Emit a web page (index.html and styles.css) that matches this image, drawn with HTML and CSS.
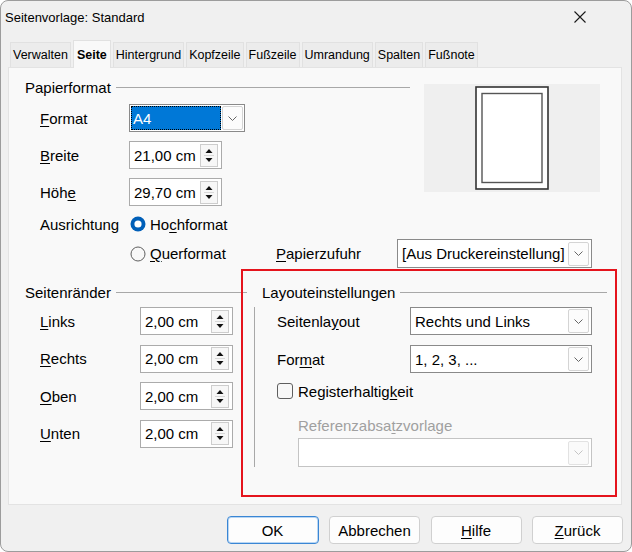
FILE: index.html
```html
<!DOCTYPE html>
<html lang="de">
<head>
<meta charset="UTF-8">
<title>Seitenvorlage: Standard</title>
<link rel="stylesheet" href="styles.css">
</head>
<body>
<div class="dialog">
    <div class="titlebar">
        <span class="title">Seitenvorlage: Standard</span>
        <span class="close">
            <svg width="12" height="12" viewBox="0 0 12 12"><path d="M0.5 0.5 L11.5 11.5 M11.5 0.5 L0.5 11.5" stroke="#1a1a1a" stroke-width="1.1" fill="none"/></svg>
        </span>
    </div>

    <div class="tabs">
        <div class="tab">Verwalten</div>
        <div class="tab active">Seite</div>
        <div class="tab">Hintergrund</div>
        <div class="tab">Kopfzeile</div>
        <div class="tab">Fußzeile</div>
        <div class="tab">Umrandung</div>
        <div class="tab">Spalten</div>
        <div class="tab">Fußnote</div>
    </div>

    <div class="panel">
        <div class="top">
            <div class="paper">
                <div class="group-head"><span>Papierformat</span><span class="line"></span></div>

                <div class="row first">
                    <span class="lbl"><u>F</u>ormat</span>
                    <div class="combo combo-a4">
                        <span class="val"><span class="sel">A4</span></span>
                        <span class="drop"><svg width="9" height="5" viewBox="0 0 9 5"><polyline points="0.5,0.5 4.5,4.5 8.5,0.5" fill="none" stroke="#666" stroke-width="1"/></svg></span>
                    </div>
                </div>
                <div class="row">
                    <span class="lbl"><u>B</u>reite</span>
                    <div class="spin">
                        <span class="val">21,00 cm</span>
                        <span class="btns"><svg width="16" height="21" viewBox="0 0 16 21"><polygon points="4.5,8 11.5,8 8,4" fill="#111"/><line x1="3" y1="10.5" x2="13" y2="10.5" stroke="#d8d8d8"/><polygon points="4.5,13 11.5,13 8,17" fill="#111"/></svg></span>
                    </div>
                </div>
                <div class="row">
                    <span class="lbl">Höh<u>e</u></span>
                    <div class="spin">
                        <span class="val">29,70 cm</span>
                        <span class="btns"><svg width="16" height="21" viewBox="0 0 16 21"><polygon points="4.5,8 11.5,8 8,4" fill="#111"/><line x1="3" y1="10.5" x2="13" y2="10.5" stroke="#d8d8d8"/><polygon points="4.5,13 11.5,13 8,17" fill="#111"/></svg></span>
                    </div>
                </div>
                <div class="row orient">
                    <span class="lbl wide">Ausrichtung</span>
                    <span class="radio">
                        <svg width="16" height="16" viewBox="0 0 16 16"><circle cx="8" cy="8" r="7.5" fill="#005fb8"/><circle cx="8" cy="8" r="3.6" fill="#fff"/></svg>
                        <span>Ho<u>c</u>hformat</span>
                    </span>
                </div>
            </div>
            <div class="preview">
                <svg width="74" height="104" viewBox="0 0 74 104">
                    <rect x="1" y="1" width="72" height="102" fill="#fff" stroke="#333" stroke-width="1.6"/>
                    <rect x="7" y="7.5" width="60" height="89" fill="#fff" stroke="#555" stroke-width="1.4"/>
                </svg>
            </div>
        </div>

        <div class="row tray">
            <span class="radio radio-q">
                <svg width="16" height="16" viewBox="0 0 16 16"><circle cx="8" cy="8" r="7" fill="#f8f8f8" stroke="#5f5f5f" stroke-width="1"/></svg>
                <span><u>Q</u>uerformat</span>
            </span>
            <span class="lbl tray-lbl"><u>P</u>apierzufuhr</span>
            <div class="combo combo-tray">
                <span class="val">[Aus Druckereinstellung]</span>
                <span class="drop"><svg width="9" height="5" viewBox="0 0 9 5"><polyline points="0.5,0.5 4.5,4.5 8.5,0.5" fill="none" stroke="#666" stroke-width="1"/></svg></span>
            </div>
        </div>

        <div class="bottom">
            <div class="margins">
                <div class="group-head"><span>Seitenränder</span><span class="line"></span></div>
                <div class="row first">
                    <span class="lbl"><u>L</u>inks</span>
                    <div class="spin">
                        <span class="val">2,00 cm</span>
                        <span class="btns"><svg width="16" height="21" viewBox="0 0 16 21"><polygon points="4.5,8 11.5,8 8,4" fill="#111"/><line x1="3" y1="10.5" x2="13" y2="10.5" stroke="#d8d8d8"/><polygon points="4.5,13 11.5,13 8,17" fill="#111"/></svg></span>
                    </div>
                </div>
                <div class="row">
                    <span class="lbl"><u>R</u>echts</span>
                    <div class="spin">
                        <span class="val">2,00 cm</span>
                        <span class="btns"><svg width="16" height="21" viewBox="0 0 16 21"><polygon points="4.5,8 11.5,8 8,4" fill="#111"/><line x1="3" y1="10.5" x2="13" y2="10.5" stroke="#d8d8d8"/><polygon points="4.5,13 11.5,13 8,17" fill="#111"/></svg></span>
                    </div>
                </div>
                <div class="row">
                    <span class="lbl"><u>O</u>ben</span>
                    <div class="spin">
                        <span class="val">2,00 cm</span>
                        <span class="btns"><svg width="16" height="21" viewBox="0 0 16 21"><polygon points="4.5,8 11.5,8 8,4" fill="#111"/><line x1="3" y1="10.5" x2="13" y2="10.5" stroke="#d8d8d8"/><polygon points="4.5,13 11.5,13 8,17" fill="#111"/></svg></span>
                    </div>
                </div>
                <div class="row">
                    <span class="lbl"><u>U</u>nten</span>
                    <div class="spin">
                        <span class="val">2,00 cm</span>
                        <span class="btns"><svg width="16" height="21" viewBox="0 0 16 21"><polygon points="4.5,8 11.5,8 8,4" fill="#111"/><line x1="3" y1="10.5" x2="13" y2="10.5" stroke="#d8d8d8"/><polygon points="4.5,13 11.5,13 8,17" fill="#111"/></svg></span>
                    </div>
                </div>
            </div>

            <div class="layout">
                <div class="group-head"><span>Layouteinstellungen</span><span class="line"></span></div>
                <div class="layout-body">
                    <div class="lrow">
                        <span class="lbl">Seitenla<u>y</u>out</span>
                        <div class="combo combo-wide">
                            <span class="val">Rechts und Links</span>
                            <span class="drop"><svg width="9" height="5" viewBox="0 0 9 5"><polyline points="0.5,0.5 4.5,4.5 8.5,0.5" fill="none" stroke="#666" stroke-width="1"/></svg></span>
                        </div>
                    </div>
                    <div class="lrow second">
                        <span class="lbl">For<u>m</u>at</span>
                        <div class="combo combo-wide">
                            <span class="val">1, 2, 3, ...</span>
                            <span class="drop"><svg width="9" height="5" viewBox="0 0 9 5"><polyline points="0.5,0.5 4.5,4.5 8.5,0.5" fill="none" stroke="#666" stroke-width="1"/></svg></span>
                        </div>
                    </div>
                    <div class="check-row">
                        <span class="checkbox"></span>
                        <span>Registerhaltig<u>k</u>eit</span>
                    </div>
                    <div class="ref-lbl">Referenzabsa<u>t</u>zvorlage</div>
                    <div class="combo combo-off">
                        <span class="val"></span>
                        <span class="drop"><svg width="9" height="5" viewBox="0 0 9 5"><polyline points="0.5,0.5 4.5,4.5 8.5,0.5" fill="none" stroke="#c4c4c4" stroke-width="1"/></svg></span>
                    </div>
                </div>
            </div>
        </div>
    </div>

    <div class="buttons">
        <button class="btn default">OK</button>
        <button class="btn">Abbrechen</button>
        <button class="btn"><u>H</u>ilfe</button>
        <button class="btn"><u>Z</u>urück</button>
    </div>

    <div class="highlight"></div>
</div>
</body>
</html>
```

FILE: styles.css
```css
* {
    box-sizing: border-box;
}
body {
    margin: 0;
    font-family: "Liberation Sans", Arial, sans-serif;
    font-size: 15px;
    color: #000;
    background: #fff;
}
u {
    text-underline-offset: 2px;
}

.dialog {
    position: relative;
    width: 632px;
    height: 552px;
    border: 1px solid #9c9c9c;
    border-radius: 8px;
    background: #f0f0f0;
    overflow: hidden;
}

.titlebar {
    height: 32px;
    display: flex;
    align-items: center;
    justify-content: space-between;
    padding-left: 4px;
    font-size: 13px;
}
.close {
    display: flex;
    margin-right: 45px;
}

.tabs {
    position: relative;
    z-index: 1;
    display: flex;
    align-items: flex-end;
    gap: 2px;
    height: 28px;
    margin: 7px 0 -1px 9px;
    font-size: 12.5px;
}
.tab {
    height: 25px;
    margin-bottom: 1px;
    padding: 0 2px;
    display: flex;
    align-items: center;
    background: #ececec;
    border: 1px solid #e1e1e1;
    border-bottom: none;
}
.tab.active {
    height: 28px;
    margin-bottom: 0;
    padding: 0 3px;
    background: #f9f9f9;
    font-weight: bold;
}

.panel {
    height: 438px;
    margin: 0 9px 0 7px;
    padding: 10px 0 0 16px;
    background: #f9f9f9;
    border: 1px solid #e3e3e3;
}

.group-head {
    display: flex;
    align-items: center;
    height: 18px;
}
.group-head .line {
    flex: 1;
    height: 1px;
    margin-left: 5px;
    background: #a8a8a8;
}

.top {
    display: flex;
}
.paper {
    width: 385px;
}
.preview {
    width: 176px;
    height: 108px;
    margin: 6px 0 0 14px;
    background: #efefef;
    display: flex;
    align-items: center;
    justify-content: center;
}

.row {
    display: flex;
    align-items: center;
    height: 28px;
    margin-top: 9px;
    padding-left: 15px;
}
.row.first {
    margin-top: 8px;
}
.row.orient {
    margin-top: 4px;
}
.lbl {
    width: 89px;
    flex-shrink: 0;
}
.lbl.wide {
    width: 90px;
}

.radio {
    display: flex;
    align-items: center;
    gap: 4px;
}
.radio svg {
    display: block;
}

.row.tray {
    height: 29px;
    margin-top: 1px;
    padding-left: 105px;
}
.radio-q {
    width: 146px;
}
.tray-lbl {
    width: 121px;
}

.combo {
    display: flex;
    align-items: center;
    height: 28px;
    padding: 2px;
    background: #fff;
    border: 1px solid #8a8a8a;
}
.combo .val {
    flex: 1;
    padding-left: 2px;
    white-space: nowrap;
    overflow: hidden;
}
.combo .drop {
    width: 21px;
    height: 24px;
    display: flex;
    align-items: center;
    justify-content: center;
    background: #fcfcfc;
    border: 1px solid #d4d4d4;
    border-radius: 2px;
}
.combo-a4 {
    width: 116px;
    padding: 1px;
}
.combo-a4 .val {
    height: 24px;
    padding: 0;
    margin-right: 1px;
}
.combo-a4 .sel {
    display: flex;
    align-items: center;
    height: 100%;
    padding-left: 2px;
    color: #fff;
    background: #0078d7;
    outline: 1px dotted #000;
    outline-offset: -1px;
}
.combo-tray {
    width: 195px;
    height: 29px;
}
.combo-wide {
    width: 182px;
}
.combo-off {
    width: 294px;
    height: 29px;
    margin: 3px 0 0 21px;
    border-color: #c4c4c4;
}
.combo-off .drop {
    background: #fafafa;
    border-color: #e2e2e2;
}

.spin {
    display: flex;
    align-items: center;
    width: 93px;
    height: 28px;
    padding: 0 3px 0 4px;
    background: #fff;
    border: 1px solid #ababab;
}
.spin .val {
    flex: 1;
}
.spin .btns {
    display: flex;
    width: 18px;
    height: 23px;
    background: #f7f7f7;
    border: 1px solid #cdcdcd;
}

.bottom {
    display: flex;
    margin-top: 15px;
}
.margins {
    width: 222px;
}
.margins .row {
    margin-top: 9.5px;
}
.margins .row.first {
    margin-top: 6px;
}
.margins .lbl {
    width: 100px;
}

.layout {
    width: 353px;
    margin-left: 7px;
}
.layout .group-head {
    padding-left: 8px;
}
.layout-body {
    margin-top: 6px;
    padding-left: 22px;
    border-left: 1px solid #a8a8a8;
}
.lrow {
    display: flex;
    align-items: center;
    height: 28px;
}
.lrow.second {
    margin-top: 10px;
}
.lrow .lbl {
    width: 133px;
}
.check-row {
    display: flex;
    align-items: center;
    gap: 5px;
    height: 20px;
    margin-top: 8px;
}
.checkbox {
    width: 16px;
    height: 16px;
    background: #f8f8f8;
    border: 1px solid #5f5f5f;
    border-radius: 3px;
}
.ref-lbl {
    height: 18px;
    margin-top: 16px;
    padding-left: 21px;
    line-height: 18px;
    color: #a0a0a0;
}

.buttons {
    display: flex;
    justify-content: flex-end;
    gap: 10.5px;
    margin-top: 11px;
    padding-right: 8px;
}
.btn {
    width: 91px;
    height: 28px;
    padding: 0;
    font-family: inherit;
    font-size: 15px;
    color: #000;
    background: #fdfdfd;
    border: 1px solid #d0d0d0;
    border-radius: 4px;
}
.btn.default {
    width: 92px;
    border-color: #3a86d4;
    box-shadow: inset 0 0 0 1px #b9d6f3;
}

.highlight {
    position: absolute;
    left: 240px;
    top: 268px;
    width: 376px;
    height: 228px;
    border: 2px solid #e5141d;
}
```
